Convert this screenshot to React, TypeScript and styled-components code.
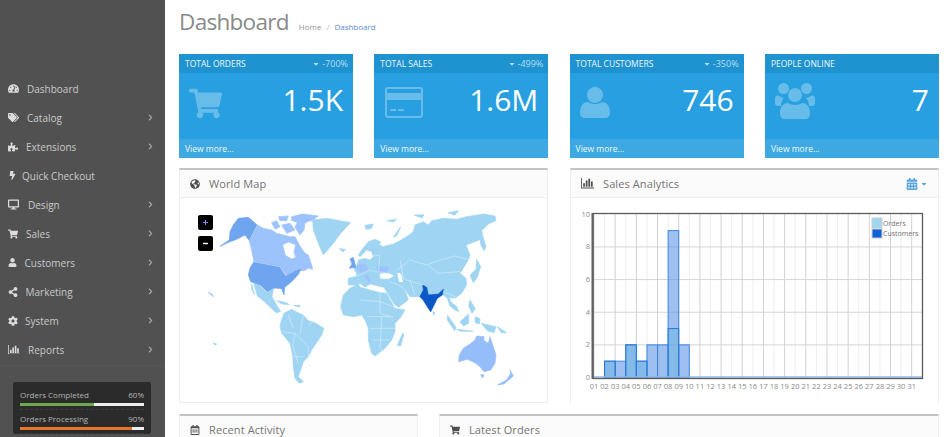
import React from "react";
import styled, { createGlobalStyle } from "styled-components";
import {
  FaTachometerAlt, FaTags, FaPuzzlePiece, FaBolt, FaDesktop, FaShoppingCart, FaUser,
  FaShareAlt, FaCog, FaChevronRight, FaCaretDown, FaGlobeAmericas, FaRegCalendarAlt, FaCalendarAlt,
} from "react-icons/fa";

const Global = createGlobalStyle`
  html, body { margin: 0; padding: 0; background: #fff; overflow: hidden; }
  body { font-family: "Open Sans", "Liberation Sans", sans-serif; }
`;

const Page = styled.div`
  display: flex;
  width: 950px;
  height: 437px;
  overflow: hidden;
`;
const Sidebar = styled.aside`
  flex: 0 0 165px;
  height: 437px;
  background: #515151;
  padding-top: 74px;
  box-sizing: border-box;
  overflow: hidden;
`;
const Menu = styled.ul`
  list-style: none;
  margin: 0;
  padding: 0 0 1px;
  border-bottom: 1px solid #575757;
`;
const MenuItem = styled.li`
  height: 29px;
  display: flex;
  align-items: center;
  padding: 0 12px 0 8px;
  color: #c9c9c9;
  font-size: 10px;
`;
const MenuIcon = styled.span<{ $w: number }>`
  width: ${(p) => p.$w}px;
  display: flex;
  align-items: center;
  flex: none;
  color: #dcdcdc;
`;
const MenuLabel = styled.span`
  flex: 1;
`;
const Chevron = styled(FaChevronRight)`
  width: 5px;
  height: 7px;
  color: #a9a9a9;
`;
const StatsBox = styled.div`
  margin: 16px 14px 0 13px;
  background: #2b2b2b;
  border-radius: 2px;
  padding: 7px 7px 0;
`;
const StatRow = styled.div`
  padding-bottom: 3px;
  margin-bottom: 3px;
  border-bottom: 1px dashed #3d3d3d;
`;
const StatText = styled.div`
  display: flex;
  justify-content: space-between;
  color: #b4b4b4;
  font-size: 8px;
  line-height: 12px;
  margin-bottom: 2px;
`;
const Track = styled.div`
  height: 3px;
  background: #eee;
`;
const Fill = styled.div<{ $c: string }>`
  height: 100%;
  background: ${(p) => p.$c};
`;

const Main = styled.main`
  flex: 1;
  min-width: 0;
  padding: 0 11px 0 14px;
`;
const TitleRow = styled.div`
  height: 54px;
  display: flex;
  align-items: baseline;
  padding-top: 4px;
  box-sizing: border-box;
`;
const Title = styled.h1`
  margin: 0;
  font-size: 22.5px;
  font-weight: 400;
  line-height: 35px;
  letter-spacing: -0.7px;
  color: #8a8a8a;
`;
const Crumbs = styled.div`
  margin-left: 10px;
  font-size: 8px;
  color: #8f8f8f;
  span { color: #5b8ec7; }
  i { font-style: normal; color: #bbb; margin: 0 5px; }
`;
const Cards = styled.section`
  display: grid;
  grid-template-columns: repeat(4, 174px);
  column-gap: 21.3px;
`;
const Card = styled.div`
  height: 104px;
  background: #289fe0;
  color: #fff;
  display: flex;
  flex-direction: column;
`;
const CardHead = styled.div`
  height: 19px;
  background: #1f92d0;
  display: flex;
  align-items: center;
  justify-content: space-between;
  padding: 0 5px 0 6px;
  font-size: 8.5px;
  color: #eef8fd;
`;
const CardDelta = styled.span`
  display: flex;
  align-items: center;
  gap: 2px;
  font-size: 9px;
  color: #b9def4;
`;
const CardBody = styled.div`
  flex: 1;
  display: flex;
  align-items: flex-start;
  justify-content: space-between;
  padding: 10px 10px 0 10px;
`;
const CardValue = styled.div`
  font-size: 30px;
  line-height: 38px;
  color: #fff;
  margin-top: -2px;
`;
const CardFoot = styled.div`
  height: 19px;
  line-height: 19px;
  background: #3ea8e3;
  padding-left: 6px;
  font-size: 8.5px;
  color: #eef8fd;
`;
const PanelRow = styled.section<{ $cols: string; $gap: number; $top: number }>`
  display: grid;
  grid-template-columns: ${(p) => p.$cols};
  column-gap: ${(p) => p.$gap}px;
  margin-top: ${(p) => p.$top}px;
`;
const Panel = styled.div<{ $h?: number }>`
  border: 1px solid #efefef;
  border-top: 2px solid #c4c4c4;
  height: ${(p) => (p.$h ? `${p.$h}px` : "auto")};
  box-sizing: border-box;
  background: #fff;
`;
const PanelHead = styled.div`
  height: 27px;
  display: flex;
  align-items: center;
  gap: 9px;
  padding: 0 10px;
  background: #fbfbfb;
  border-bottom: 1px solid #eeeeee;
  font-size: 11px;
  color: #747474;
  svg { flex: none; color: #4f4f4f; }
`;
const HeadTitle = styled.span`
  flex: 1;
  letter-spacing: 0.1px;
`;
const CalendarBtn = styled.span`
  display: flex;
  align-items: center;
  gap: 2px;
  svg { color: #5aa6dc; }
`;
const PanelBody = styled.div`
  display: block;
  line-height: 0;
  svg { display: block; }
`;

const CartIcon = () => <FaShoppingCart size={33} color="rgba(255,255,255,.3)" style={{ marginTop: 4 }} />;
const CreditIcon = () => (
  <svg width="40" height="32" viewBox="0 0 40 32" style={{ marginTop: 4 }}>
    <path fill="rgba(255,255,255,.3)" fillRule="evenodd" d="M4 0h32a3 3 0 0 1 3 3v25a3 3 0 0 1-3 3H4a3 3 0 0 1-3-3V3a3 3 0 0 1 3-3zM3 3v3h34V3a1 1 0 0 0-1-1H4a1 1 0 0 0-1 1zm0 10v15a1 1 0 0 0 1 1h32a1 1 0 0 0 1-1V13zm3 9h6v2H6zm8 0h6v2h-6z" />
  </svg>
);
const PersonIcon = () => (
  <svg width="30" height="32" viewBox="0 0 30 32" style={{ marginTop: 4 }}>
    <g fill="rgba(255,255,255,.3)">
      <circle cx="15" cy="8" r="8" />
      <path d="M0 26c0-8 4-11 8-11 2 1 4 2 7 2s5-1 7-2c4 0 8 3 8 11 0 3-2 5-5 5H5c-3 0-5-2-5-5z" />
    </g>
  </svg>
);
const GroupIcon = () => (
  <svg width="40" height="37" viewBox="0 0 40 37">
    <g fill="rgba(255,255,255,.3)">
      <circle cx="8.5" cy="5.5" r="5.5" />
      <circle cx="31.5" cy="5.5" r="5.5" />
      <path d="M1 13c2-1 3 0 5 1 1 .5 2 1 3 1-2 2-3 5-3 8H3c-2 0-3-1-3-3v-4c0-1 0-2 1-3zM39 13c-2-1-3 0-5 1-1 .5-2 1-3 1 2 2 3 5 3 8h3c2 0 3-1 3-3v-4c0-1 0-2-1-3z" />
      <circle cx="20" cy="12" r="7" />
      <path d="M5 30c0-6 3-10 8-10 2 1 4 2 7 2s5-1 7-2c5 0 8 4 8 10 0 4-2 6-5 6H10c-3 0-5-2-5-6z" />
    </g>
  </svg>
);
const BarsIcon = ({ size = 13 }: { size?: number }) => (
  <svg width={size} height={size * 0.8} viewBox="0 0 15 12">
    <path fill="currentColor" d="M0 0h1v11h14v1H0zM2.5 6h2v4h-2zM5.5 3h2v7h-2zM8.5 1h2v9h-2zM11.5 4h2v6h-2z" />
  </svg>
);

const items = [
  { label: "Dashboard", w: 19, icon: <FaTachometerAlt size={11} /> },
  { label: "Catalog", w: 19, icon: <FaTags size={11} />, more: true },
  { label: "Extensions", w: 18, icon: <FaPuzzlePiece size={10} />, more: true },
  { label: "Quick Checkout", w: 14, icon: <FaBolt size={9} /> },
  { label: "Design", w: 20, icon: <FaDesktop size={11} />, more: true },
  { label: "Sales", w: 18, icon: <FaShoppingCart size={10} />, more: true },
  { label: "Customers", w: 16.5, icon: <FaUser size={9} />, more: true },
  { label: "Marketing", w: 17.5, icon: <FaShareAlt size={10} />, more: true },
  { label: "System", w: 17, icon: <FaCog size={10} />, more: true },
  { label: "Reports", w: 20, icon: <BarsIcon size={12} />, more: true },
];

const stats = [
  { label: "Orders Completed", pct: 60, color: "#6fa84e" },
  { label: "Orders Processing", pct: 90, color: "#e8752a" },
];

const cards = [
  { title: "TOTAL ORDERS", delta: "-700%", value: "1.5K", icon: <CartIcon /> },
  { title: "TOTAL SALES", delta: "-499%", value: "1.6M", icon: <CreditIcon /> },
  { title: "TOTAL CUSTOMERS", delta: "-350%", value: "746", icon: <PersonIcon /> },
  { title: "PEOPLE ONLINE", value: "7", icon: <GroupIcon /> },
];

const LIGHT = "#9fd5f3";
const MID = "#9cc3fb";
const STRONG = "#6fa5ef";
const DEEP = "#0b57c8";
const AUS = "#94bdf9";
const WATER = "#ffffff";

// Land outlines; coordinates are in 3× crops of the map (origin 180,200 and 360,200).
const west: [string, string][] = [
  [MID, "232,75 250,85 275,90 290,100 310,105 330,110 345,110 360,138 375,160 385,165 395,195 398,208 385,205 372,212 355,212 340,215 320,226 300,200 222,185 215,150 208,122"],
  [WATER, "310,135 325,128 345,135 340,155 345,172 335,175 318,165"],
  [STRONG, "150,95 160,75 175,55 205,52 232,75 208,122 195,105 170,118 150,125 120,139 148,120"],
  [MID, "275,68 290,62 300,80 285,88"],
  [MID, "305,75 330,70 345,90 320,100"],
  [MID, "296,50 325,48 320,62 300,62"],
  [MID, "335,50 368,42 415,48 398,60 375,68 372,90 360,105 345,82 352,66 335,62"],
  [STRONG, "222,185 300,200 318,228 345,214 362,207 356,222 335,245 314,262 312,285 305,266 285,264 262,276 240,256 212,245 205,225 210,204"],
  [LIGHT, "222,250 240,258 262,278 280,266 276,290 288,312 302,335 288,338 255,306 232,288 226,268"],
  [LIGHT, "215,252 222,280 225,285 215,268"],
  [LIGHT, "303,365 312,340 335,328 348,335 370,345 385,362 405,368 432,385 425,405 412,425 395,450 385,470 370,485 362,510 355,530 370,545 358,550 345,535 340,500 338,465 330,430 305,400 300,380"],
  [LIGHT, "398,60 440,55 480,62 512,68 482,100 460,130 430,165 415,130 400,90"],
  [LIGHT, "478,146 496,148 490,156"],
  [LIGHT, "290,302 320,308 328,314 305,312"],
  [LIGHT, "340,316 360,316 358,322"],
  [MID, "85,276 95,282 101,290 92,284"],
  [MID, "100,430 110,432 106,435"],
];
const east: [string, string][] = [
  [LIGHT, "0,262 30,270 60,278 80,280 90,300 105,325 135,330 120,355 105,370 105,395 95,420 75,445 45,468 35,460 25,420 25,385 15,360 5,345 -20,350 -50,345 -58,320 -50,285 -30,265 -5,252"],
  [LIGHT, "-5,165 5,150 25,125 45,118 62,125 58,135 70,140 100,132 120,122 140,110 160,95 165,75 190,65 205,75 215,62 250,55 290,58 320,50 370,42 405,48 408,62 385,72 365,92 370,115 345,125 318,135 330,165 325,180 316,195 300,220 318,235 320,255 305,280 285,295 268,292 272,305 290,320 296,335 285,330 270,318 262,295 250,285 245,275 232,295 212,335 195,310 180,290 150,290 135,270 145,300 115,322 100,310 85,285 72,262 55,258 30,252 15,262 0,250 -10,255 -35,255 -35,235 -8,228 -18,205 -8,195 -5,180 15,175 30,180 40,170 35,155 20,150 0,170"],
  [WATER, "60,222 85,220 100,228 85,236 62,235"],
  [WATER, "113,220 122,222 128,245 118,245"],
  [MID, "-8,194 18,192 24,212 4,218 -8,206"],
  [MID, "52,198 88,202 78,218 52,214"],
  [MID, "14,228 22,226 32,245 26,246"],
  [STRONG, "-30,176 -20,172 -12,202 -32,205 -24,192"],
  [DEEP, "188,255 200,262 205,285 235,282 250,268 247,285 232,295 212,335 205,325 190,300 180,290 190,270"],
  [LIGHT, "15,76 40,72 34,86 18,88"],
  [LIGHT, "80,62 110,58 100,66"],
  [LIGHT, "162,45 192,44 186,54"],
  [LIGHT, "264,38 296,32 284,46"],
  [LIGHT, "100,112 122,80 110,108"],
  [LIGHT, "360,110 368,108 378,140 372,152 362,134"],
  [LIGHT, "350,178 362,200 352,232 340,248 330,226 348,208"],
  [LIGHT, "218,335 225,338 222,346"],
  [LIGHT, "128,400 132,402 122,438 112,436"],
  [LIGHT, "262,345 288,382 284,392 262,360"],
  [LIGHT, "300,365 326,342 326,370 310,378"],
  [LIGHT, "330,300 346,326 336,340 326,318"],
  [LIGHT, "290,388 340,394 300,394"],
  [LIGHT, "345,350 360,356 358,372 346,368"],
  [LIGHT, "364,370 408,380 402,398 382,392"],
  [LIGHT, "412,380 440,398 424,398"],
  [AUS, "296,485 298,465 310,445 330,432 345,420 350,408 372,410 372,422 385,430 390,410 400,440 408,465 405,490 392,510 372,515 360,500 345,488 322,478"],
  [AUS, "362,524 372,524 368,534"],
  [AUS, "412,555 440,540 452,520 450,510 460,528 432,552"],
];
const westBorders = [
  "222,185 300,200 318,228", "232,75 208,122", "240,256 262,278",
  "340,385 325,345", "305,395 345,400 385,440 385,470", "345,400 338,435 355,490", "370,345 360,400", "395,365 385,380", "340,470 370,470",
  "510,265 515,350", "482,310 540,320", "540,250 535,350", "482,330 535,335",
];
const eastBorders = [
  "0,300 60,305 105,322", "60,268 60,340 90,350", "25,350 100,350", "30,385 105,385", "40,420 90,420", "65,350 60,450",
  "110,210 150,180 200,195 240,180 285,168 330,180", "205,195 235,220 300,215 320,235", "110,220 140,240 190,255",
  "150,240 165,285", "90,245 125,260 150,290", "250,275 285,290 295,325", "30,170 60,165 55,210", "120,180 130,235",
  "-8,228 24,212 52,214 78,218", "75,268 112,330",
];

const WorldMap = () => (
  <svg width="367" height="205" viewBox="180 198 367 205">
    <g transform="translate(180 200) scale(0.3333)" strokeLinejoin="round">
      {west.map(([c, p], i) => <polygon key={i} points={p} fill={c} stroke={c} strokeWidth="2" />)}
      {westBorders.map((p, i) => <polyline key={i} points={p} fill="none" stroke="#e3f3fc" strokeWidth="1.5" />)}
    </g>
    <g transform="translate(360 200) scale(0.3333)" strokeLinejoin="round">
      {east.map(([c, p], i) => <polygon key={i} points={p} fill={c} stroke={c} strokeWidth="2" />)}
      {eastBorders.map((p, i) => <polyline key={i} points={p} fill="none" stroke="#e3f3fc" strokeWidth="1.5" />)}
    </g>
    <g>
      <rect x="198" y="215" width="15" height="15" rx="2" fill="#000" />
      <rect x="198" y="236" width="15" height="15" rx="2" fill="#000" />
      <path d="M205.5 220v5M203 222.500h5" stroke="#7a8cff" strokeWidth="1" />
      <path d="M203 243.500h5" stroke="#fff" strokeWidth="1.4" />
    </g>
  </svg>
);

const days = Array.from({ length: 31 }, (_, i) => i + 1);
const dayX = (d: number) => 594 + 10.59 * (d - 1);
const valY = (v: number) => 377.500 - 16.32 * v;
const orders: Record<number, number> = { 2: 1, 3: 1, 4: 2, 5: 1, 6: 2, 7: 2, 8: 9, 9: 2 };
const customers: Record<number, number> = { 2: 1, 4: 2, 5: 1, 8: 3 };

const Bars = ({ data, fill, stroke }: { data: Record<number, number>; fill: string; stroke: string }) => (
  <>
    {Object.entries(data).map(([d, v]) => (
      <rect key={d} x={dayX(+d)} y={valY(v)} width={10.59} height={16.32 * v} fill={fill} stroke={stroke} strokeWidth="1" />
    ))}
  </>
);

const Chart = () => (
  <svg width="367" height="205" viewBox="571 198 367 205" fontFamily="'Open Sans', sans-serif">
    <rect x="571" y="198" width="367" height="205" fill="#fff" />
    {days.map((d) => (
      <line key={d} x1={dayX(d)} x2={dayX(d)} y1={214} y2={378} stroke={d % 2 ? "#d2d2d2" : "#eeeeee"} strokeWidth="1" />
    ))}
    {[2, 4, 6, 8].map((v) => (
      <line key={v} x1={593} x2={923} y1={valY(v)} y2={valY(v)} stroke="#d4d4d4" strokeWidth="1" />
    ))}
    <Bars data={orders} fill="rgba(92,150,232,.6)" stroke="#3f86e0" />
    <Bars data={customers} fill="rgba(100,180,220,.45)" stroke="#2a78dc" />
    <line x1={593} x2={923} y1={377} y2={377} stroke="#8fb8ea" strokeWidth="1.5" />
    <rect x="593" y="213.500" width="329.500" height="165" fill="none" stroke="#5a5a5a" strokeWidth="1.300" />
    <line x1={592.5} x2={592.5} y1={213} y2={379} stroke="#5f5f5f" strokeWidth="2" />
    <g fontSize="7.500" fill="#8a8a8a" textAnchor="end">
      {[0, 2, 4, 6, 8, 10].map((v) => (
        <text key={v} x={590} y={valY(v) + 2.500}>{v}</text>
      ))}
    </g>
    <g fontSize="7.500" fill="#8a8a8a" textAnchor="middle">
      {days.map((d) => (
        <text key={d} x={dayX(d)} y={389}>{String(d).padStart(2, "0")}</text>
      ))}
    </g>
    <rect x="872" y="218" width="10" height="10" fill="#9fd5f3" stroke="#ccc" />
    <rect x="872" y="229" width="10" height="9" fill="#0f62d8" stroke="#ccc" />
    <g fontSize="7" fill="#6f6f6f">
      <text x="883" y="225.500">Orders</text>
      <text x="883" y="236">Customers</text>
    </g>
  </svg>
);

export default function App() {
  return (
    <>
      <Global />
      <Page>
        <Sidebar>
          <Menu>
            {items.map((it) => (
              <MenuItem key={it.label}>
                <MenuIcon $w={it.w}>{it.icon}</MenuIcon>
                <MenuLabel>{it.label}</MenuLabel>
                {it.more && <Chevron />}
              </MenuItem>
            ))}
          </Menu>
          <StatsBox>
            {stats.map((s) => (
              <StatRow key={s.label}>
                <StatText>
                  <span>{s.label}</span>
                  <span>{s.pct}%</span>
                </StatText>
                <Track>
                  <Fill $c={s.color} style={{ width: `${s.pct}%` }} />
                </Track>
              </StatRow>
            ))}
          </StatsBox>
        </Sidebar>
        <Main>
          <TitleRow>
            <Title>Dashboard</Title>
            <Crumbs>Home<i>/</i><span>Dashboard</span></Crumbs>
          </TitleRow>
          <Cards>
            {cards.map((c) => (
              <Card key={c.title}>
                <CardHead>
                  <span>{c.title}</span>
                  {c.delta && (
                    <CardDelta><FaCaretDown size={8} />{c.delta}</CardDelta>
                  )}
                </CardHead>
                <CardBody>
                  {c.icon}
                  <CardValue>{c.value}</CardValue>
                </CardBody>
                <CardFoot>View more...</CardFoot>
              </Card>
            ))}
          </Cards>
          <PanelRow $cols="369px 369px" $gap={22} $top={10}>
            <Panel $h={235}>
              <PanelHead>
                <FaGlobeAmericas size={10} />
                <HeadTitle>World Map</HeadTitle>
              </PanelHead>
              <PanelBody><WorldMap /></PanelBody>
            </Panel>
            <Panel $h={235}>
              <PanelHead>
                <BarsIcon size={13} />
                <HeadTitle>Sales Analytics</HeadTitle>
                <CalendarBtn><FaCalendarAlt size={12} /><FaCaretDown size={8} /></CalendarBtn>
              </PanelHead>
              <PanelBody><Chart /></PanelBody>
            </Panel>
          </PanelRow>
          <PanelRow $cols="239px 500px" $gap={21} $top={11}>
            <Panel>
              <PanelHead>
                <FaRegCalendarAlt size={10} />
                <HeadTitle>Recent Activity</HeadTitle>
              </PanelHead>
            </Panel>
            <Panel>
              <PanelHead>
                <FaShoppingCart size={10} />
                <HeadTitle>Latest Orders</HeadTitle>
              </PanelHead>
            </Panel>
          </PanelRow>
        </Main>
      </Page>
    </>
  );
}
